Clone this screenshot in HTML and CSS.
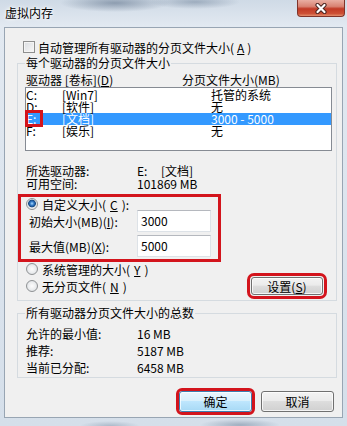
FILE: index.html
```html
<!DOCTYPE html>
<html lang="zh-CN">
<head>
    <meta charset="UTF-8">
    <title>虚拟内存</title>
    <link rel="stylesheet" href="styles.css">
</head>
<body>
    <div id="win">
        <div class="titlebar">
            <span class="title">虚拟内存</span>
            <span class="close">
                <svg width="14" height="11" viewBox="0 0 14 11">
                    <path d="M3.5 2 L10.5 9 M10.5 2 L3.5 9" stroke="#4a2520" stroke-width="4.2" stroke-linecap="round"/>
                    <path d="M3.5 2 L10.5 9 M10.5 2 L3.5 9" stroke="#fff" stroke-width="2.2" stroke-linecap="round"/>
                </svg>
            </span>
        </div>

        <div class="panel">
            <div class="check-row"><span class="checkbox"></span>自动管理所有驱动器的分页文件大小(<u>A</u>)</div>

            <fieldset class="group">
                <legend>每个驱动器的分页文件大小</legend>
                <div class="list-head">
                    <span class="c-drive">驱动器 [卷标](<u>D</u>)</span>
                    <span>分页文件大小(MB)</span>
                </div>
                <ul class="list">
                    <li><span class="c1">C:</span><span class="c2">[Win7]</span><span>托管的系统</span></li>
                    <li><span class="c1">D:</span><span class="c2">[软件]</span><span>无</span></li>
                    <li class="selected"><span class="c1">E:<i class="mark"></i></span><span class="c2">[文档]</span><span>3000 - 5000</span></li>
                    <li><span class="c1">F:</span><span class="c2">[娱乐]</span><span>无</span></li>
                </ul>

                <div class="info-block">
                    <div class="row"><span class="lbl">所选驱动器:</span><span class="drv">E:</span><span>[文档]</span></div>
                    <div class="row"><span class="lbl">可用空间:</span><span>101869 MB</span></div>
                </div>

                <div class="custom">
                    <div class="radio-row"><span class="radio on"></span>自定义大小(<u>C</u>):</div>
                    <div class="field"><span class="field-lbl">初始大小(MB)(<u>I</u>):</span><span class="input">3000</span></div>
                    <div class="field"><span class="field-lbl">最大值(MB)(<u>X</u>):</span><span class="input">5000</span></div>
                </div>

                <div class="mode">
                    <div class="radios">
                        <div class="radio-row"><span class="radio"></span>系统管理的大小(<u>Y</u>)</div>
                        <div class="radio-row"><span class="radio"></span>无分页文件(<u>N</u>)</div>
                    </div>
                    <button class="btn set">设置(<u>S</u>)</button>
                </div>
            </fieldset>

            <fieldset class="group totals">
                <legend>所有驱动器分页文件大小的总数</legend>
                <div class="row"><span class="lbl">允许的最小值:</span><span>16 MB</span></div>
                <div class="row"><span class="lbl">推荐:</span><span>5187 MB</span></div>
                <div class="row"><span class="lbl">当前已分配:</span><span>6458 MB</span></div>
            </fieldset>

            <div class="actions">
                <button class="btn default ok">确定</button>
                <button class="btn">取消</button>
            </div>
        </div>
    </div>
</body>
</html>
```

FILE: styles.css
```css
*{
    margin: 0;
    padding: 0;
    box-sizing: border-box;
}
body{
    width: 347px;
    height: 426px;
    overflow: hidden;
    font-family: "Noto Sans CJK SC", "Noto Sans", sans-serif;
    font-size: 12px;
    color: #000;
}
u{
    text-underline-offset: 1px;
}

/* aero frame */
#win{
    width: 347px;
    height: 426px;
    overflow: hidden;
    background:
        radial-gradient(ellipse 55px 9px at 115px 3px, rgba(85,105,130,.55), transparent),
        radial-gradient(ellipse 45px 7px at 195px 2px, rgba(95,115,140,.45), transparent),
        radial-gradient(ellipse 40px 6px at 240px 425px, rgba(95,115,140,.45), transparent),
        radial-gradient(ellipse 30px 5px at 110px 426px, rgba(95,115,140,.35), transparent),
        linear-gradient(#cfdae6, #e2e9f1 26px, #d5dfea);
}
.titlebar{
    display: flex;
    justify-content: space-between;
    align-items: flex-start;
    height: 27px;
}
.title{
    padding-left: 5px;
    line-height: 26px;
    text-shadow: 0 0 5px #fff, 0 0 3px #fff;
}
.close{
    display: flex;
    align-items: center;
    justify-content: center;
    width: 48px;
    height: 17px;
    margin-right: 2px;
    border: 1px solid #80342a;
    border-top: 0;
    border-radius: 0 0 4px 4px;
    background: linear-gradient(#e9aea2, #d98373 40%, #c13a26 55%, #cd5136 85%, #e3906f);
}

.panel{
    margin-left: 4px;
    width: 339px;
    height: 391px;
    border: 1px solid #98a5b3;
    background: #f0f0f0;
    padding: 12px 5px 0 12px;
}
.check-row{
    display: flex;
    align-items: center;
    gap: 3px;
    height: 14px;
    margin-left: 6px;
}
.checkbox{
    width: 12px;
    height: 12px;
    border: 1px solid #8e8f8f;
    background: linear-gradient(135deg, #dadde1, #f7f7f7);
    box-shadow: inset 0 0 0 1px #f4f4f4;
}

.group{
    margin-top: 2px;
    min-width: 0;
    border: 1px solid #d5dbe0;
    padding: 2px 4px 5px 7px;
}
.group legend{
    padding: 0 1px;
    line-height: 14px;
}
.list-head{
    display: flex;
    height: 15px;
    line-height: 15px;
    padding-left: 1px;
}
.c-drive{
    width: 156px;
}
.list{
    list-style: none;
    height: 64px;
    border: 1px solid #868b93;
    background: #fff;
    padding-top: 1px;
}
.list li{
    display: flex;
    height: 12px;
    line-height: 12px;
}
.list .c1{
    position: relative;
    width: 36px;
}
.list .c2{
    width: 149px;
}
.list .selected{
    background: #3399ff;
    color: #fff;
}
.mark{
    position: absolute;
    left: -1px;
    top: -3px;
    width: 18px;
    height: 17px;
    border: 3px solid #d3141c;
}

.info-block{
    margin-top: 13px;
}
.row{
    display: flex;
    height: 13px;
    line-height: 13px;
    padding-left: 1px;
}
.lbl{
    width: 111px;
}
.drv{
    width: 24px;
}

.custom{
    width: 197px;
    margin: 7px 0 0 -4px;
    padding: 1px 0 2px;
    outline: 3px solid #d3141c;
}
.radio-row{
    display: flex;
    align-items: center;
    gap: 4px;
    height: 12px;
    padding-left: 5px;
}
.radio{
    width: 12px;
    height: 12px;
    border: 1px solid #8f9294;
    border-radius: 50%;
    background: radial-gradient(circle at 50% 50%, #fdfdfd 0, #e9ebed 4px, #d6d9dc 6px);
}
.radio.on{
    background: radial-gradient(circle at 50% 45%, #a9dbff 0, #2f76c4 2px, #17487f 3.5px, #dfe4e9 4.2px, #f4f5f6 6px);
}
.field{
    display: flex;
    align-items: center;
    height: 22px;
    padding-left: 8px;
}
.field + .field{
    margin-top: 3px;
}
.field-lbl{
    width: 108px;
}
.input{
    width: 74px;
    height: 22px;
    line-height: 20px;
    padding-left: 3px;
    border: 1px solid #dde2e7;
    border-top-color: #b5b8be;
    background: #fff;
}

.mode{
    display: flex;
    justify-content: space-between;
    align-items: flex-end;
    margin-top: 3px;
}
.radios{
    display: flex;
    flex-direction: column;
    gap: 3px;
    padding: 0 0 2px 1px;
}
.radios .radio-row{
    height: 14px;
    padding-left: 0;
}

.btn{
    width: 73px;
    height: 21px;
    font: inherit;
    color: #000;
    border: 1px solid #707070;
    border-radius: 3px;
    background: linear-gradient(#f3f3f3, #ebebeb 45%, #dddddd 50%, #d0d0d0);
    box-shadow: inset 0 0 0 1px rgba(255,255,255,.75);
}
.btn.default{
    border-color: #3c7fb1;
    background: linear-gradient(#eaf6fd, #d9f0fc 45%, #bee6fd 50%, #a7d9f5);
}
.set{
    width: 72px;
    height: 18px;
    margin-right: 9px;
    outline: 3px solid #d3141c;
    outline-offset: 1px;
}
.ok{
    outline: 3px solid #d3141c;
}

.totals{
    margin-top: 5px;
    padding: 5px 4px 1px 7px;
}
.totals .row{
    height: 17px;
    line-height: 17px;
}

.actions{
    display: flex;
    justify-content: flex-end;
    gap: 9px;
    margin-top: 13px;
    padding-right: 3px;
}
```
